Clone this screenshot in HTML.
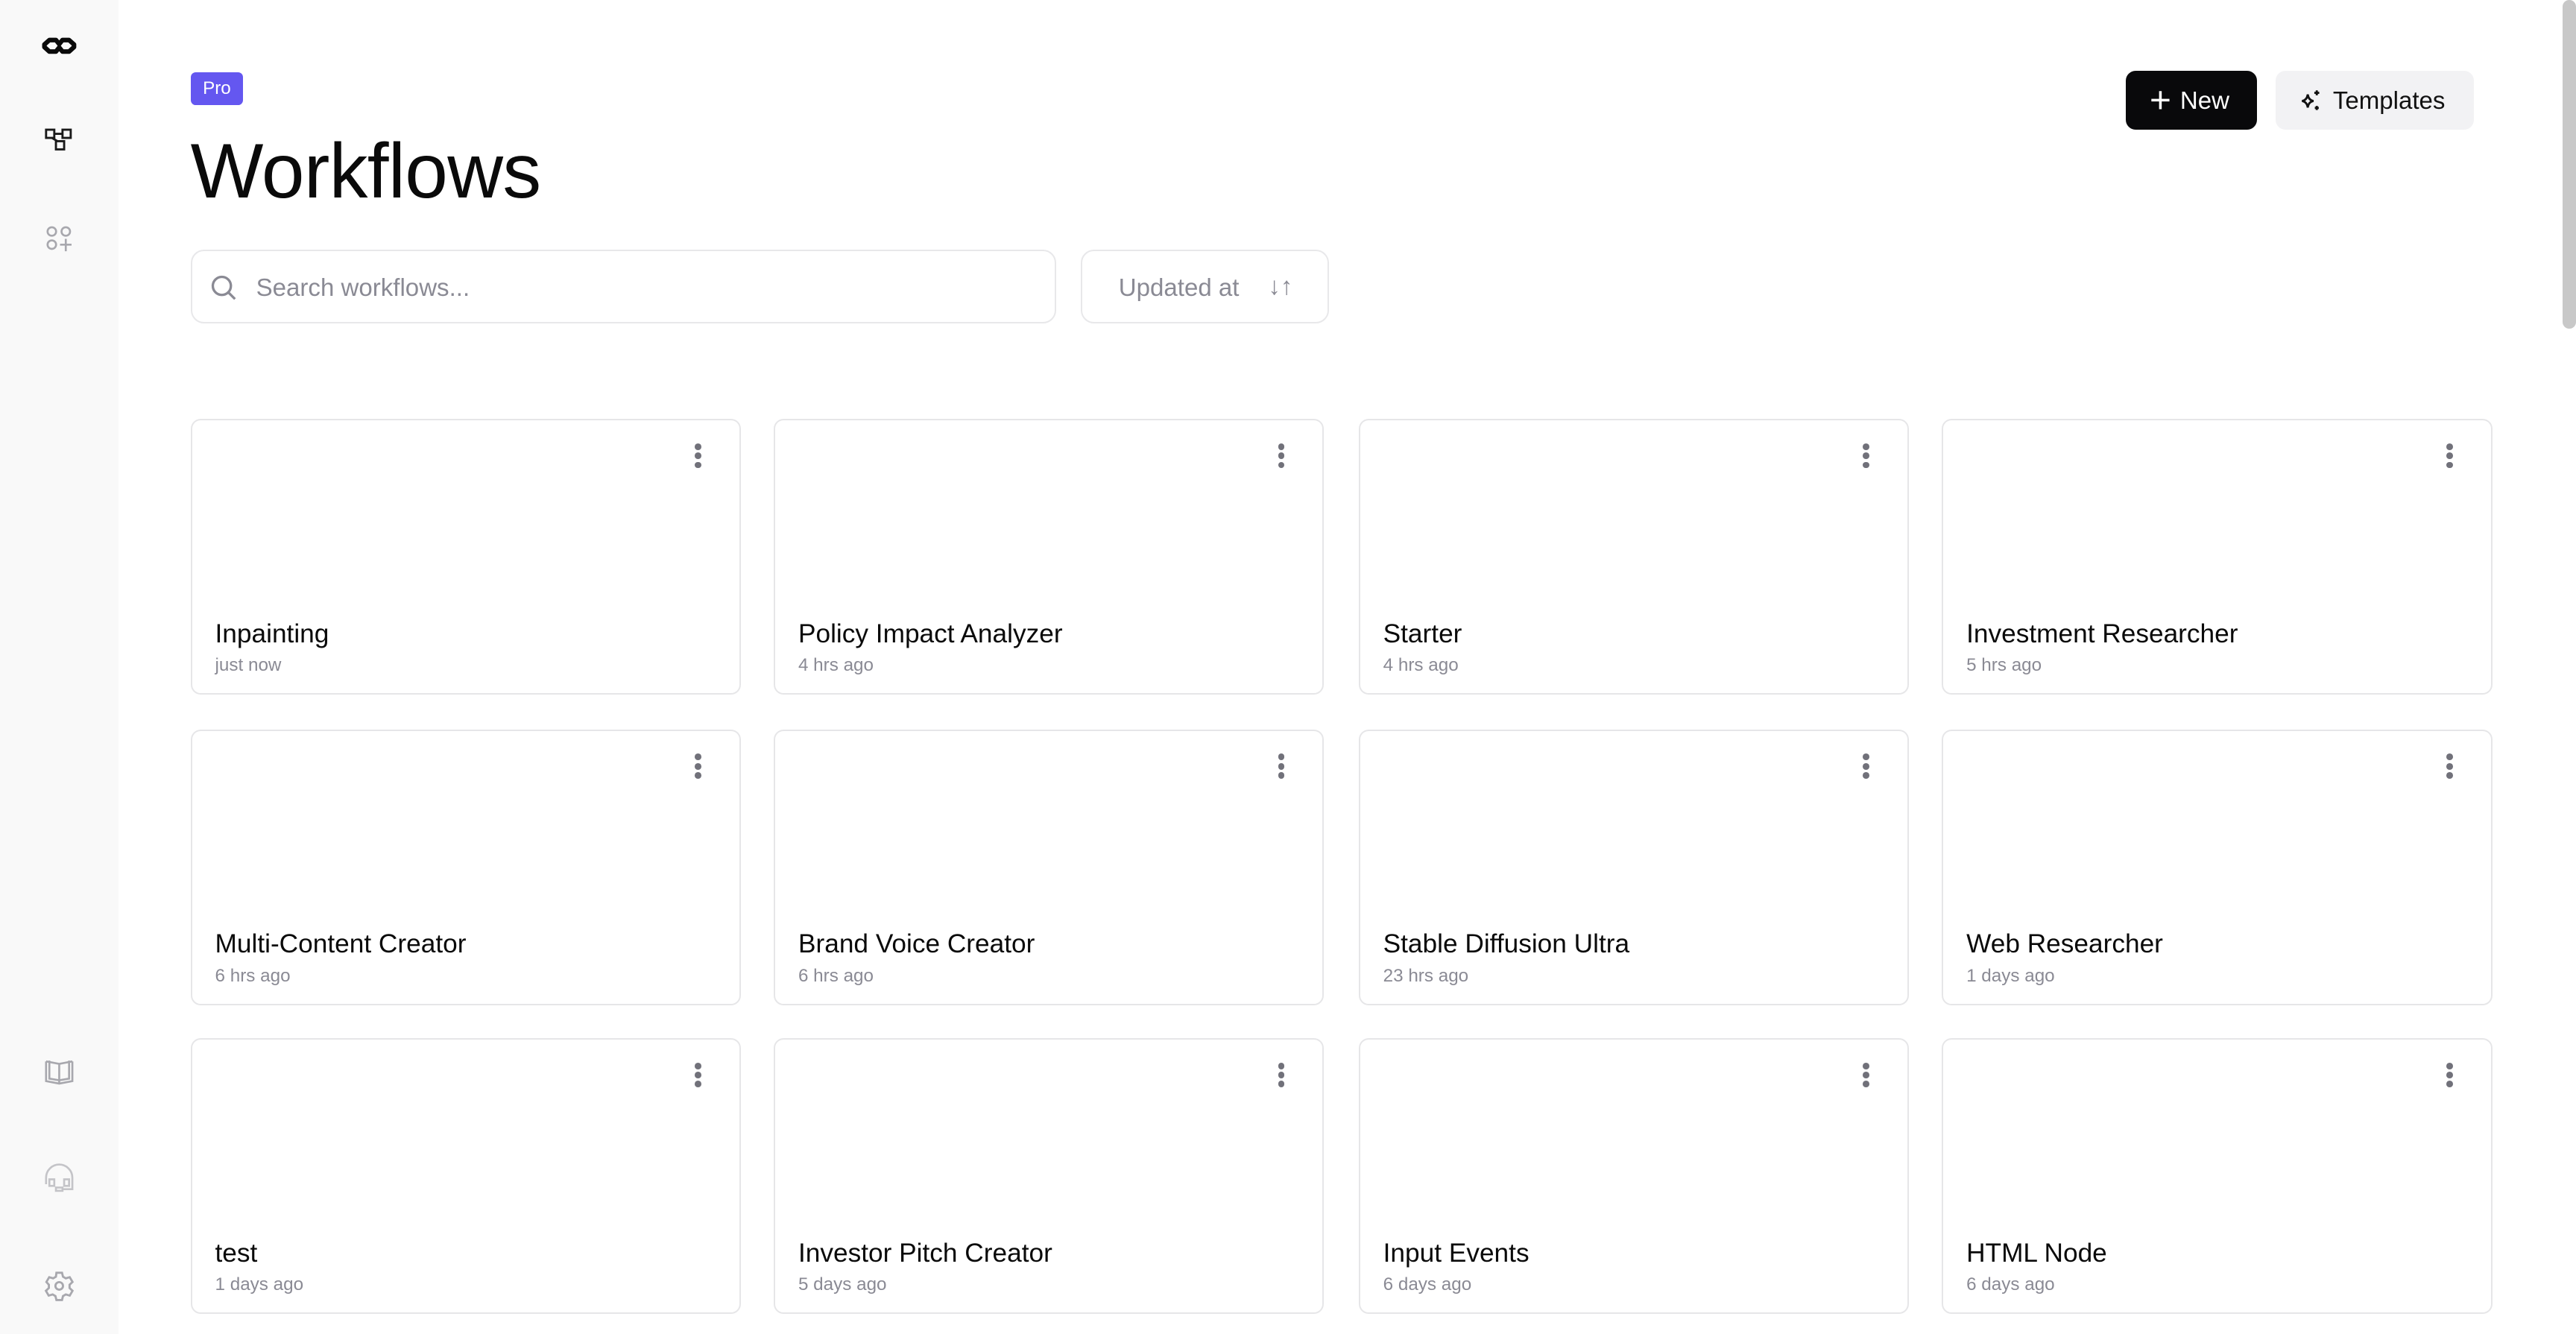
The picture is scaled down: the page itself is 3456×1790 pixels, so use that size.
<!DOCTYPE html>
<html><head><meta charset="utf-8"><style>
html,body{margin:0;padding:0;}
body{width:1568px;height:812px;overflow:hidden;zoom:2.2041;font-family:"Liberation Sans",sans-serif;background:#fff;position:relative;color:#0a0a0a}
.side{position:absolute;left:0;top:0;width:72px;height:812px;background:#f9f9f9}
.ic{position:absolute;left:24px;width:24px;height:24px}
.pro{position:absolute;left:116px;top:44px;width:32px;height:20px;background:#6457f0;border-radius:3px;color:#fff;font-size:11px;line-height:20px;text-align:center}
h1{position:absolute;left:116px;top:79px;margin:0;font-size:47px;font-weight:500;letter-spacing:-0.3px;line-height:50px}
.btn{position:absolute;top:43px;height:36px;border-radius:6px;font-size:15px;line-height:37px;box-sizing:border-box}
.new{left:1294px;width:80px;background:#09090b;color:#fff;padding-left:33px}
.tpl{left:1385px;width:121px;background:#f2f2f4;color:#111;padding-left:35px}
.search{position:absolute;left:116px;top:152px;width:527px;height:45px;border:1px solid #e8e8ea;border-radius:8px;box-sizing:border-box}
.search span{position:absolute;left:39px;top:14px;font-size:15px;color:#8a8a94}
.sort{position:absolute;left:658px;top:152px;width:151px;height:45px;border:1px solid #e8e8ea;border-radius:8px;box-sizing:border-box;font-size:15px;color:#8a8a94}
.card{position:absolute;width:335px;height:168px;border:1px solid #e6e6e8;border-radius:6px;box-sizing:border-box;background:#fff}
.card .t{position:absolute;left:14px;top:121px;font-size:16px;color:#0a0a0a}
.card .d{position:absolute;left:14px;top:143px;font-size:11px;color:#8a8a94}
.dots{position:absolute;left:306px;top:14px;width:4px}
.dots i{display:block;width:4px;height:4px;border-radius:2px;background:#71717a;margin-bottom:1.6px}
.scroll{position:absolute;left:1560px;top:0;width:8px;height:200px;background:#c8c8c8;border-radius:4px}
</style></head><body>
<div class="side">
<svg class="ic" style="top:16px" viewBox="0 0 24 24"><path d="M6 8.5 L10 8.5 L12 11 L14 8.5 L18 8.5 L21 11.2 L21 12.8 L18 15.5 L14 15.5 L12 13 L10 15.5 L6 15.5 L3 12.8 L3 11.2 Z" fill="none" stroke="#0a0a0a" stroke-width="2.8" stroke-linejoin="round"/></svg>
<svg class="ic" style="top:74px" viewBox="0 0 24 24" fill="none" stroke="#1a1a1a" stroke-width="1.3"><rect x="4" y="5" width="5" height="5"/><rect x="14" y="5" width="5" height="5"/><rect x="10" y="12" width="5" height="5"/><path d="M9 7.5H14M7.5 10L11 12"/></svg>
<svg class="ic" style="top:133px" viewBox="0 0 24 24" fill="none" stroke="#a8a8ae" stroke-width="1.2"><circle cx="7.5" cy="8" r="2.6"/><circle cx="16" cy="8" r="2.6"/><circle cx="7.5" cy="16" r="2.6"/><path d="M12.5 16H19.5M16 12.5V20"/></svg>
<svg class="ic" style="top:640px" viewBox="0 0 24 24" fill="none" stroke="#a8a8ae" stroke-width="1.2"><path d="M4 6V18L12 19.5L20 18V6M4 6L12 7.5L20 6M12 7.5V19.5"/><path d="M6 5.5V16.5L12 17.5L18 16.5V5.5" /></svg>
<svg class="ic" style="top:706px" viewBox="0 0 24 24" fill="none" stroke="#c4c4c8" stroke-width="1.2"><path d="M4 15V11A8 8 0 0 1 20 11V18H14"/><rect x="6" y="12" width="3" height="4"/><rect x="15" y="12" width="3" height="4"/><rect x="10" y="17" width="4" height="2"/></svg>
<svg class="ic" style="top:771px" viewBox="0 0 24 24" fill="none" stroke="#a8a8ae" stroke-width="1.3"><path d="M10.3 4h3.4l.6 2.4 1.7 1 2.4-.7 1.7 2.9-1.8 1.7v2l1.8 1.7-1.7 2.9-2.4-.7-1.7 1-.6 2.4h-3.4l-.6-2.4-1.7-1-2.4.7-1.7-2.9 1.8-1.7v-2L4.2 9.6l1.7-2.9 2.4.7 1.7-1z"/><circle cx="12" cy="12" r="2.3"/></svg>
</div>
<div class="pro">Pro</div>
<h1>Workflows</h1>
<div class="btn new"><svg style="position:absolute;left:14px;top:11px" width="14" height="14" viewBox="0 0 14 14" stroke="#fff" stroke-width="1.6"><path d="M7 1.5V12.5M1.5 7H12.5"/></svg>New</div>
<div class="btn tpl"><svg style="position:absolute;left:14px;top:11px" width="14" height="14" viewBox="0 0 14 14" fill="none" stroke="#111" stroke-width="1.3"><path d="M5.5 3.5Q6 7 9 7.5Q6 8 5.5 11.5Q5 8 2 7.5Q5 7 5.5 3.5Z"/><path d="M11 1V4M9.5 2.5H12.5M11 10.5V13M9.8 11.7H12.2"/></svg>Templates</div>
<div class="search"><svg style="position:absolute;left:10px;top:13px" width="18" height="18" viewBox="0 0 18 18" fill="none" stroke="#8a8a94" stroke-width="1.5"><circle cx="8" cy="8" r="5.5"/><path d="M12 12L16 16"/></svg><span>Search workflows...</span></div>
<div class="sort"><span style="position:absolute;left:22px;top:14px">Updated at</span><span style="position:absolute;left:113px;top:13px;font-size:15px">↓↑</span></div>
<div class="scroll"></div>

<div class="card" style="left:116px;top:255px"><div class="dots"><i></i><i></i><i></i></div><div class="t">Inpainting</div><div class="d">just now</div></div>
<div class="card" style="left:471px;top:255px"><div class="dots"><i></i><i></i><i></i></div><div class="t">Policy Impact Analyzer</div><div class="d">4 hrs ago</div></div>
<div class="card" style="left:827px;top:255px"><div class="dots"><i></i><i></i><i></i></div><div class="t">Starter</div><div class="d">4 hrs ago</div></div>
<div class="card" style="left:1182px;top:255px"><div class="dots"><i></i><i></i><i></i></div><div class="t">Investment Researcher</div><div class="d">5 hrs ago</div></div>

<div class="card" style="left:116px;top:444px"><div class="dots"><i></i><i></i><i></i></div><div class="t">Multi-Content Creator</div><div class="d">6 hrs ago</div></div>
<div class="card" style="left:471px;top:444px"><div class="dots"><i></i><i></i><i></i></div><div class="t">Brand Voice Creator</div><div class="d">6 hrs ago</div></div>
<div class="card" style="left:827px;top:444px"><div class="dots"><i></i><i></i><i></i></div><div class="t">Stable Diffusion Ultra</div><div class="d">23 hrs ago</div></div>
<div class="card" style="left:1182px;top:444px"><div class="dots"><i></i><i></i><i></i></div><div class="t">Web Researcher</div><div class="d">1 days ago</div></div>

<div class="card" style="left:116px;top:632px"><div class="dots"><i></i><i></i><i></i></div><div class="t">test</div><div class="d">1 days ago</div></div>
<div class="card" style="left:471px;top:632px"><div class="dots"><i></i><i></i><i></i></div><div class="t">Investor Pitch Creator</div><div class="d">5 days ago</div></div>
<div class="card" style="left:827px;top:632px"><div class="dots"><i></i><i></i><i></i></div><div class="t">Input Events</div><div class="d">6 days ago</div></div>
<div class="card" style="left:1182px;top:632px"><div class="dots"><i></i><i></i><i></i></div><div class="t">HTML Node</div><div class="d">6 days ago</div></div>
</body></html>
